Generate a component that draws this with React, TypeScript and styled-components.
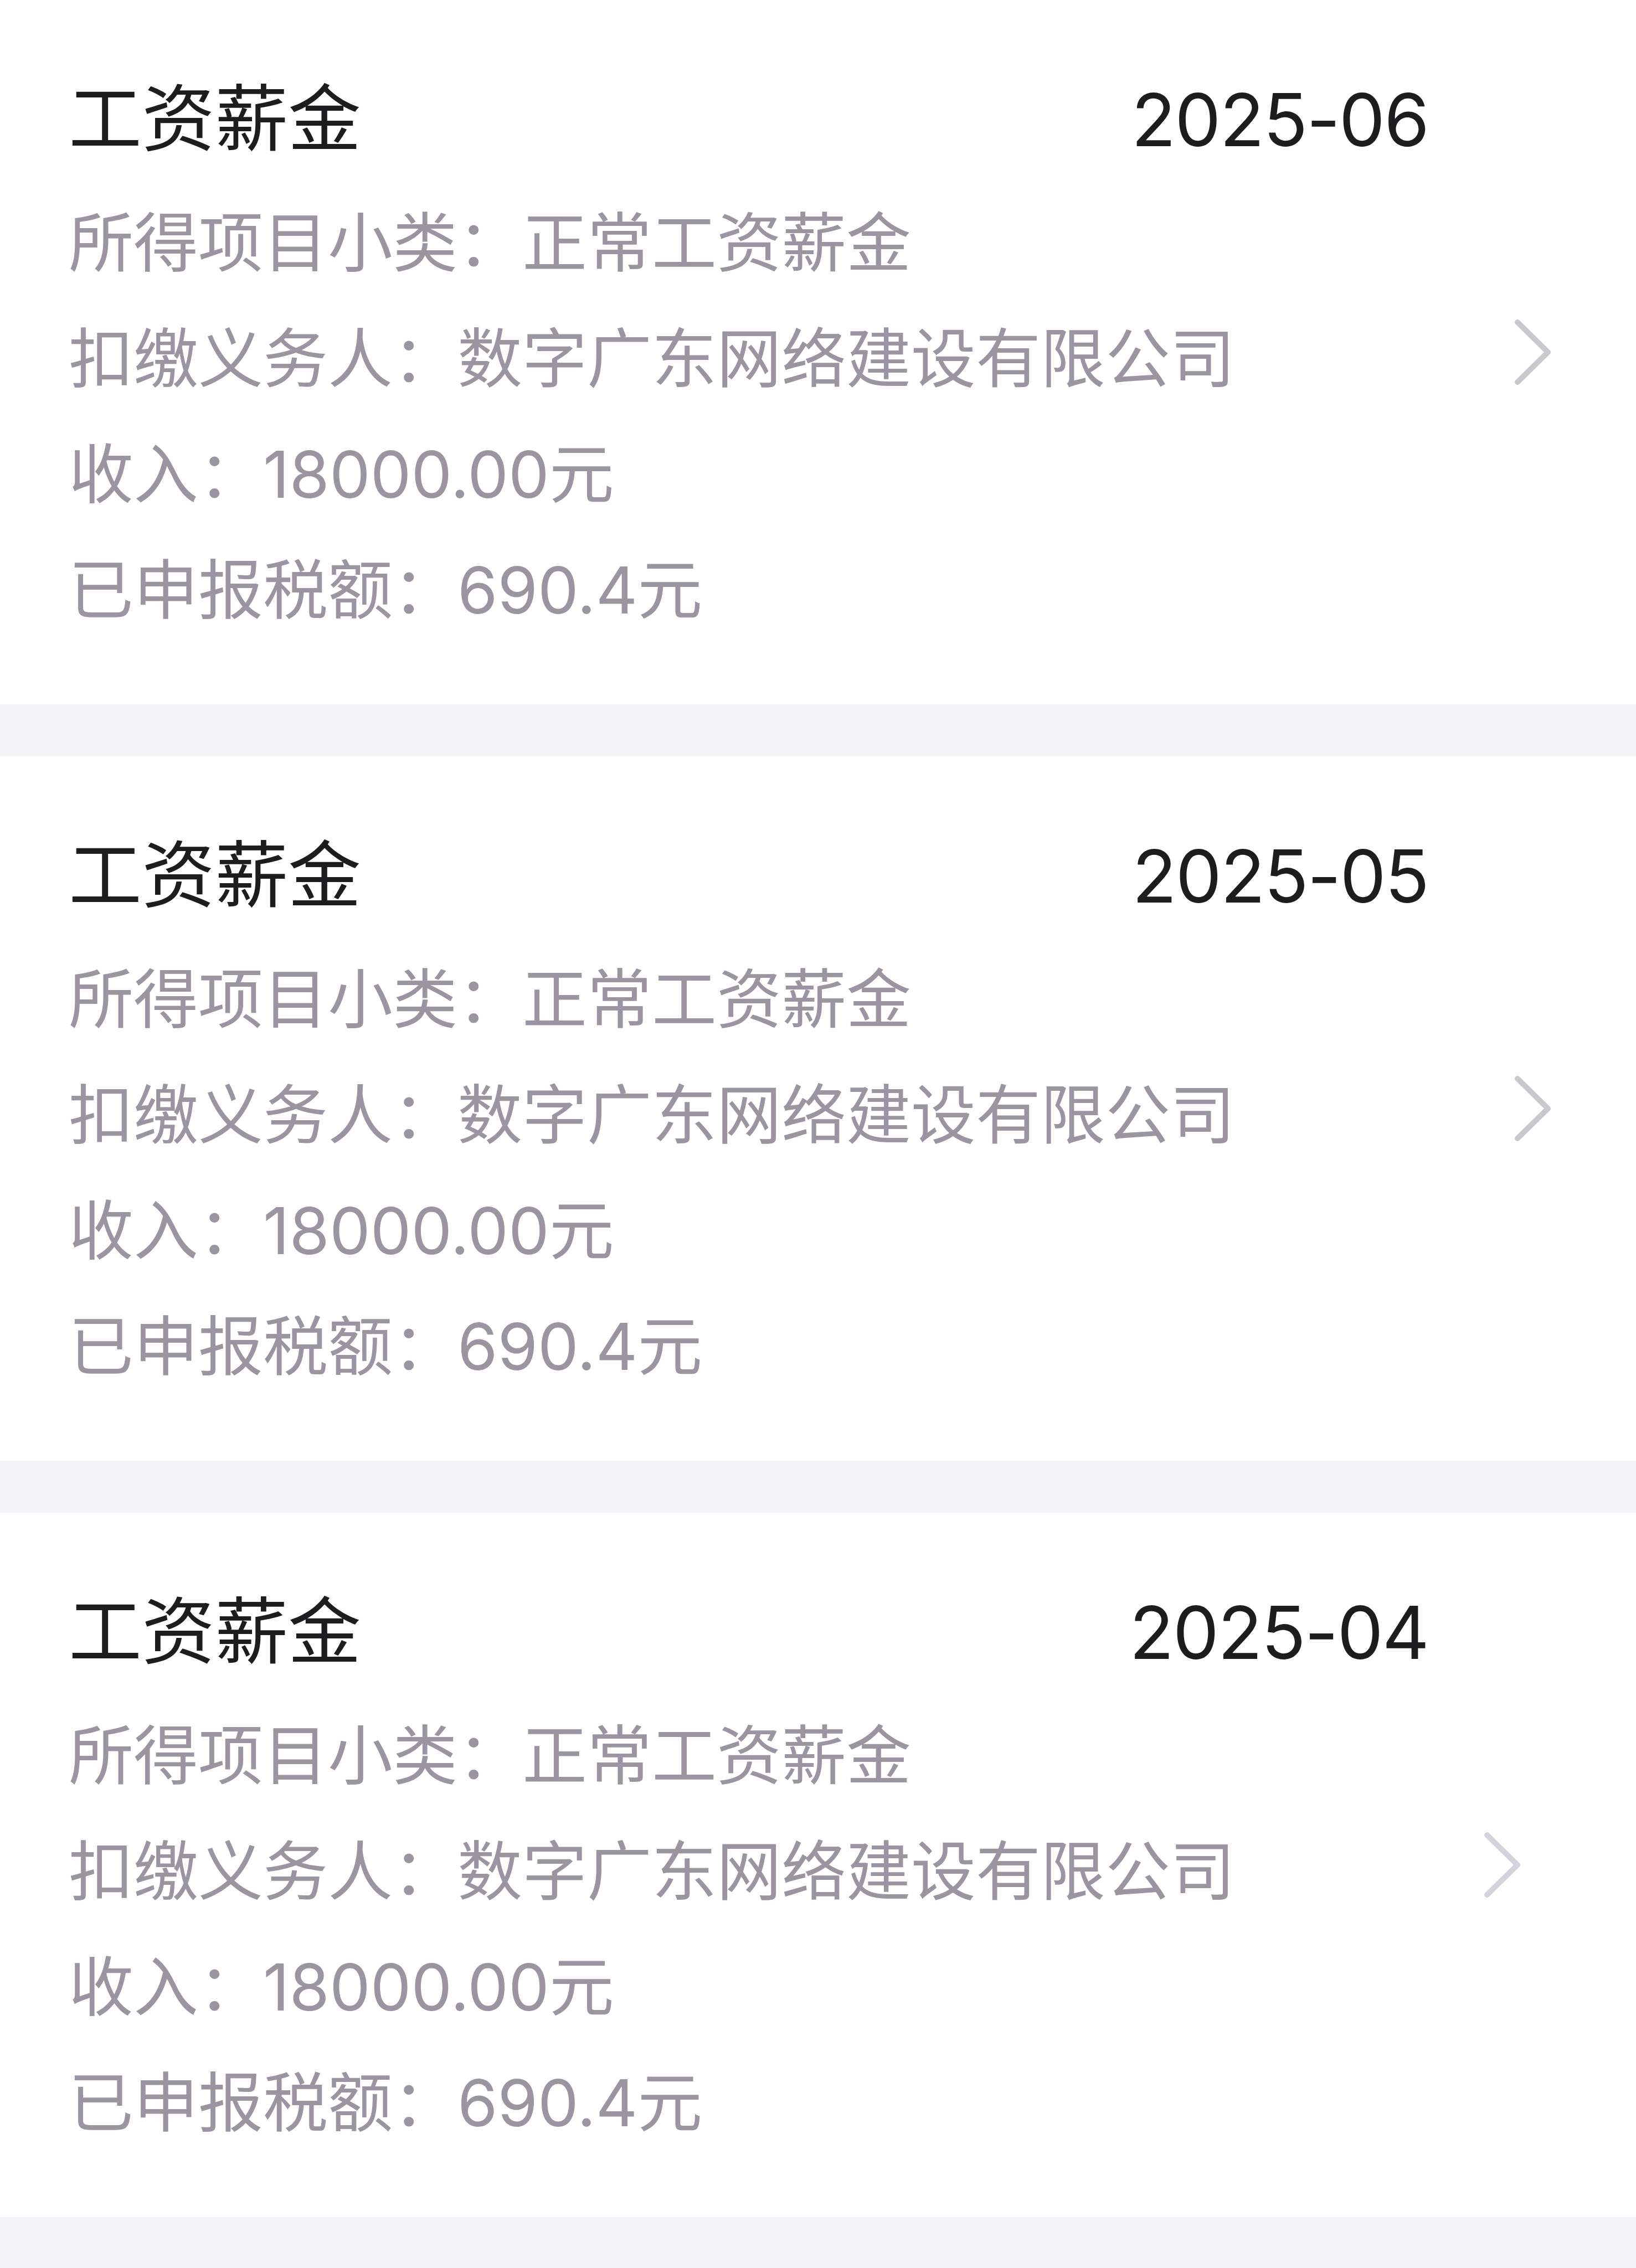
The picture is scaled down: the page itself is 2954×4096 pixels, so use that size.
import styled, { createGlobalStyle } from "styled-components";

// ── Types ─────────────────────────────────────────────────────────────────────

interface TaxRecord {
  id: string;
  category: string;
  period: string;
  subCategory: string;
  payer: string;
  income: string;
  taxDeclared: string;
  chevronShift?: number;
}

const records: TaxRecord[] = [
  {
    id: "r1",
    category: "工资薪金",
    period: "2025-06",
    subCategory: "正常工资薪金",
    payer: "数字广东网络建设有限公司",
    income: "18000.00元",
    taxDeclared: "690.4元",
  },
  {
    id: "r2",
    category: "工资薪金",
    period: "2025-05",
    subCategory: "正常工资薪金",
    payer: "数字广东网络建设有限公司",
    income: "18000.00元",
    taxDeclared: "690.4元",
  },
  {
    id: "r3",
    category: "工资薪金",
    period: "2025-04",
    subCategory: "正常工资薪金",
    payer: "数字广东网络建设有限公司",
    income: "18000.00元",
    taxDeclared: "690.4元",
    chevronShift: 55,
  },
];

// ── Styled components ─────────────────────────────────────────────────────────

const GlobalStyle = createGlobalStyle`
  html, body {
    margin: 0;
    padding: 0;
    background: #f3f3f8;
  }
  body {
    font-family: Inter, "Noto Sans CJK SC", sans-serif;
  }
`;

const Page = styled.div`
  min-height: 4096px;
  background: #f3f3f8;
  display: flex;
  flex-direction: column;
  gap: 94px;
`;

const Card = styled.div`
  height: 1272px;
  box-sizing: border-box;
  background: #ffffff;
  display: flex;
  padding-left: 124px;
`;

const Body = styled.div`
  flex: 1;
  display: flex;
  flex-direction: column;
  padding-top: 122px;
`;

const HeadRow = styled.div`
  display: flex;
  align-items: center;
  justify-content: space-between;
  margin-bottom: 28px;
`;

const Title = styled.span`
  font-size: 132px;
  line-height: 180px;
  font-weight: 400;
  color: #1d1d1f;
`;

const Period = styled.span`
  font-size: 132px;
  line-height: 180px;
  font-weight: 400;
  letter-spacing: -2px;
  color: #1d1d1f;
  padding-top: 4px;
  margin-right: -2px;
`;

const InfoLine = styled.div`
  font-size: 117px;
  line-height: 209px;
  color: #9b95a1;
  white-space: nowrap;
`;

const Chevron = styled.svg<{ $shift: number }>`
  flex: none;
  display: block;
  align-self: center;
  margin-left: ${(p) => 153 - p.$shift}px;
  margin-right: ${(p) => 149 + p.$shift}px;
  color: ${(p) => (p.$shift ? "#d3d3db" : "#c8c8cd")};
`;

// ── Component ─────────────────────────────────────────────────────────────────

export default function App() {
  return (
    <>
      <GlobalStyle />
      <Page>
        {records.map((r) => (
          <Card key={r.id}>
            <Body>
              <HeadRow>
                <Title>{r.category}</Title>
                <Period>{r.period}</Period>
              </HeadRow>
              <InfoLine>所得项目小类：{r.subCategory}</InfoLine>
              <InfoLine>扣缴义务人：{r.payer}</InfoLine>
              <InfoLine>收入：{r.income}</InfoLine>
              <InfoLine>已申报税额：{r.taxDeclared}</InfoLine>
            </Body>
            <Chevron $shift={r.chevronShift ?? 0} width="75" height="128" viewBox="0 0 75 128">
              <path
                d="M10 10 L65 64 L10 118"
                fill="none"
                stroke="currentColor"
                strokeWidth="10"
                strokeLinecap="round"
                strokeLinejoin="round"
              />
            </Chevron>
          </Card>
        ))}
      </Page>
    </>
  );
}
